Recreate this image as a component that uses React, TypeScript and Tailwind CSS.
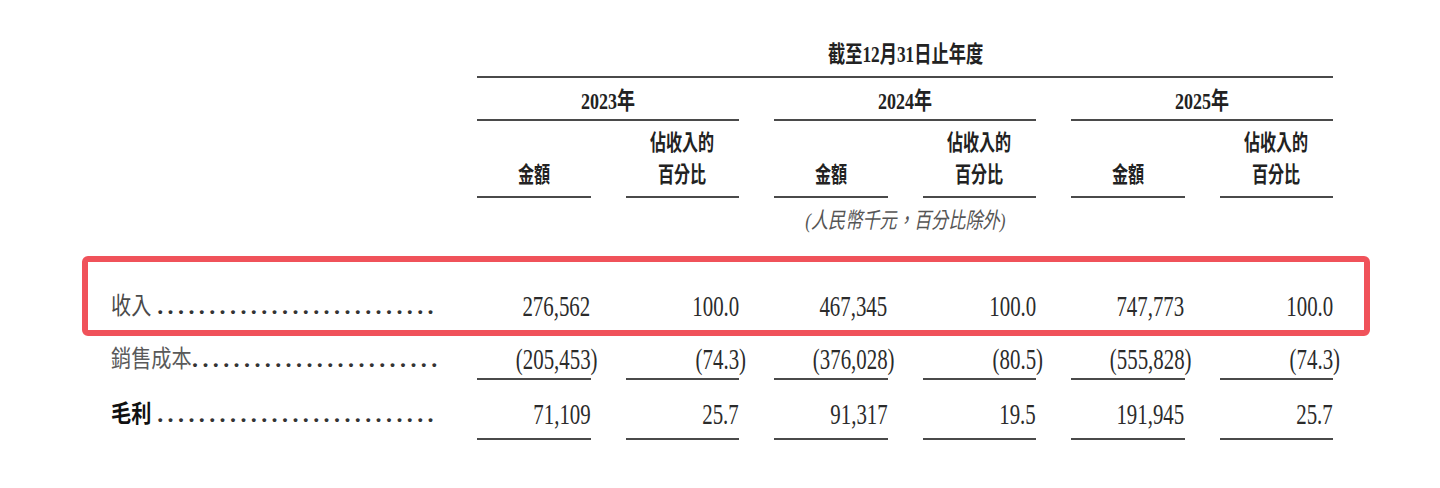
import React from 'react'

type Row = {
  label: string
  labelCls: string
  dots: number
  values: string[]
}

const rows: Row[] = [
  {
    label: '銷售成本',
    labelCls: 'text-[#5a5a5a] -mr-[15px]',
    dots: 24,
    values: ['(205,453)', '(74.3)', '(376,028)', '(80.5)', '(555,828)', '(74.3)'],
  },
  {
    label: '毛利',
    labelCls: 'text-[#111] font-bold -mr-[8px]',
    dots: 27,
    values: ['71,109', '25.7', '91,317', '19.5', '191,945', '25.7'],
  },
]

function Label({ text, labelCls, dots }: { text: string; labelCls: string; dots: number }) {
  return (
    <div className="flex items-baseline pr-[4px]">
      <span className={`inline-block origin-left scale-x-[0.84] text-[24px] leading-[30px] whitespace-nowrap ${labelCls}`}>
        {text}
      </span>
      <span className="flex-1" />
      <span className="whitespace-nowrap text-[24px] leading-[30px] tracking-[4.4px] font-bold text-[#333]">
        {'.'.repeat(dots)}
      </span>
    </div>
  )
}

function Value({ v, cls = '' }: { v: string; cls?: string }) {
  const neg = v.startsWith('(')
  return (
    <div className={`flex justify-end ${cls}`}>
      <span
        className={`inline-block origin-right scale-x-[0.72] text-[29px] leading-[30px] text-[#2b2b2b] whitespace-nowrap ${neg ? '-mr-[7px]' : ''}`}
      >
        {v}
      </span>
    </div>
  )
}

function SubHead({ lines }: { lines: string[] }) {
  return (
    <div className="h-[77px] border-b-2 border-[#4a4a4a] flex flex-col items-center justify-end pb-[5px]">
      {lines.map((l) => (
        <span key={l} className="inline-block scale-x-[0.73] text-[22px] leading-[32px] font-bold text-[#222] whitespace-nowrap">
          {l}
        </span>
      ))}
    </div>
  )
}

export default function App() {
  const years = ['2023', '2024', '2025']
  return (
    <div
      lang="zh-Hant"
      className="w-[1440px] h-[488px] bg-white overflow-hidden font-['Liberation_Serif','Noto_Sans_CJK_TC',serif]"
    >
      {/* period header */}
      <div className="grid grid-cols-[442px_repeat(6,113.5px)] gap-x-[35px]">
        <div className="col-start-2 col-span-6 h-[78px] border-b-2 border-[#4a4a4a] flex items-end justify-center pb-[9px]">
          <span className="inline-block scale-x-[0.75] text-[23px] leading-[24px] font-bold text-[#222] whitespace-nowrap">
            截至12月31日止年度
          </span>
        </div>
      </div>

      {/* years */}
      <div className="grid grid-cols-[442px_repeat(6,113.5px)] gap-x-[35px]">
        {years.map((y, i) => (
          <div
            key={y}
            className={`col-span-2 h-[43px] border-b-2 border-[#4a4a4a] flex items-end justify-center pb-[6px] ${i === 0 ? 'col-start-2' : ''}`}
          >
            <span className="inline-block scale-x-[0.75] text-[24px] leading-[24px] font-bold text-[#222] whitespace-nowrap">
              {y}年
            </span>
          </div>
        ))}
      </div>

      {/* column heads */}
      <div className="grid grid-cols-[442px_repeat(6,113.5px)] gap-x-[35px]">
        <div />
        {years.map((y) => (
          <React.Fragment key={y}>
            <SubHead lines={['金額']} />
            <SubHead lines={['佔收入的', '百分比']} />
          </React.Fragment>
        ))}
      </div>

      {/* unit note */}
      <div className="grid grid-cols-[442px_repeat(6,113.5px)] gap-x-[35px]">
        <div className="col-start-2 col-span-6 flex justify-center pt-[8px]">
          <span className="inline-block scale-x-[0.78] text-[22px] leading-[24px] italic text-[#555] whitespace-nowrap">
            (人民幣千元<span className="font-['Noto_Sans_CJK_TC',sans-serif]">，</span>百分比除外)
          </span>
        </div>
      </div>

      {/* highlighted revenue row */}
      <div className="mt-[23px] ml-[82px] w-[1288px] border-[6px] border-[#f0525a] rounded-[6px]">
        <div className="grid grid-cols-[354px_repeat(6,113.5px)] gap-x-[35px] pt-[29px] pb-[9px]">
          <div className="pl-[23px]">
            <Label text="收入" labelCls="text-[#4a4a4a] -mr-[8px]" dots={27} />
          </div>
          {['276,562', '100.0', '467,345', '100.0', '747,773', '100.0'].map((v, i) => (
            <Value key={i} v={v} />
          ))}
        </div>
      </div>

      {/* other rows */}
      {rows.map((r, ri) => (
        <div
          key={r.label}
          className={`grid grid-cols-[442px_repeat(6,113.5px)] gap-x-[35px] ${ri === 0 ? 'pt-[8px]' : 'pt-[19px]'}`}
        >
          <div className="pl-[111px]">
            <Label text={r.label} labelCls={r.labelCls} dots={r.dots} />
          </div>
          {r.values.map((v, i) => (
            <Value
              key={i}
              v={v}
              cls={ri === 0 ? 'border-b-2 border-[#4a4a4a] pb-[4px]' : 'border-b-2 border-[#4a4a4a] pb-[9px]'}
            />
          ))}
        </div>
      ))}
    </div>
  )
}
